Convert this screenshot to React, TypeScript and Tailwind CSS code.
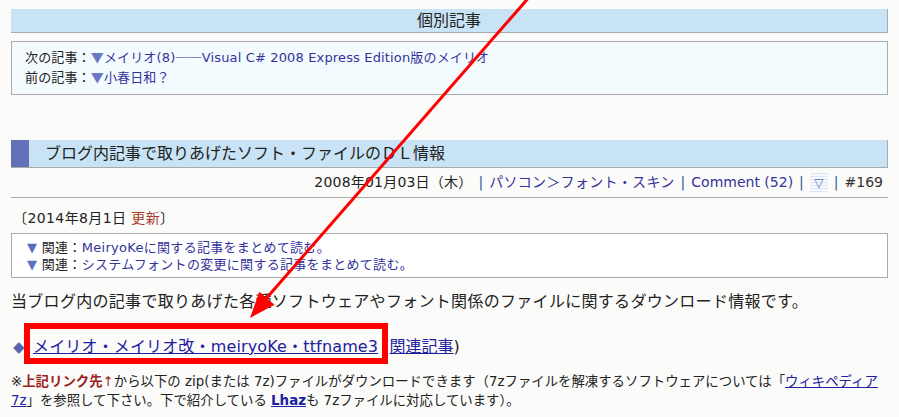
const FONT = { fontFamily: '"DejaVu Sans", "Noto Sans CJK JP", sans-serif' };
const CJK = { fontFamily: '"Noto Sans CJK JP", sans-serif' };

function Tri() {
  return <span className="text-[#5b6fc2]">▼</span>;
}

export default function App() {
  return (
    <div className="relative w-[899px] h-[417px] overflow-hidden bg-[#fbfbf9] text-[#222]" style={FONT}>
      <div className="px-[11px] pt-[9px]">
        {/* 個別記事 */}
        <div className="h-[24px] border-b border-r border-[#aaa] bg-[#c8e3f5] text-center text-[16px] leading-[23px]">
          個別記事
        </div>
        <div className="mt-[8px] border border-[#aaa] bg-[#f3fbff] pl-[13px] pt-[5px] pb-[7px] text-[13px] leading-[19px] tracking-[0.15px]">
          <div>
            次の記事：<span className="text-[#6a78c4]" style={CJK}>▼</span>
            <span className="text-[#33339a]">
              メイリオ(8)<span style={CJK}>──</span>Visual C# 2008 Express Edition版のメイリオ
            </span>
          </div>
          <div>
            前の記事：<span className="text-[#6a78c4]" style={CJK}>▼</span>
            <span className="text-[#33339a]">小春日和？</span>
          </div>
        </div>

        {/* Article header */}
        <div className="mt-[45px] flex h-[28px] items-stretch border-b border-r border-[#aaa] bg-[#c8e3f5]">
          <div className="w-[18px] bg-[#6470b9]" />
          <div className="pl-[16px] text-[16px] leading-[27px] text-[#222]">
            ブログ内記事で取りあげたソフト・ファイルのＤＬ情報
          </div>
        </div>
        <div className="flex h-[30px] items-center justify-end gap-[6px] border-b border-[#aaa] pr-[5px] text-[14px]">
          <span className="tracking-[0.2px]">2008年01月03日（木）</span>
          <span className="text-[#2a5aa0]">|</span>
          <span className="text-[#33339a] tracking-[0.3px]">パソコン＞フォント・スキン</span>
          <span className="text-[#2a5aa0]">|</span>
          <span className="text-[#33339a]">Comment (52)</span>
          <span className="text-[#2a5aa0]">|</span>
          <span className="flex h-[20px] w-[18px] items-center justify-center bg-[repeating-linear-gradient(180deg,#d9e7f7_0px,#d9e7f7_1px,#f6f9fd_1px,#f6f9fd_3px)] text-[12px] text-[#6a6ac0]">
            ▽
          </span>
          <span className="text-[#2a5aa0]">|</span>
          <span className="text-[#333]">#169</span>
        </div>

        <div className="mt-[10px] pl-[2px] text-[14px] leading-[20px] tracking-[0.4px]">
          〔2014年8月1日 <span className="text-[#a83a2e]">更新</span>〕
        </div>
        <div className="mt-[5px] border border-[#aaa] bg-white pl-[15px] pt-[5px] pb-[4px] text-[13px] leading-[17px] tracking-[0.3px]">
          <div>
            <Tri /> 関連：<span className="text-[#33339a]">MeiryoKeに関する記事をまとめて読む。</span>
          </div>
          <div>
            <Tri /> 関連：<span className="text-[#33339a]">システムフォントの変更に関する記事をまとめて読む。</span>
          </div>
        </div>

        <p className="mt-[12px] text-[16px] leading-[24px] tracking-[0.3px]">
          当ブログ内の記事で取りあげた各種ソフトウェアやフォント関係のファイルに関するダウンロード情報です。
        </p>

        <div className="mt-[21px] pl-[2px] text-[16px] leading-[24px]">
          <span className="inline-block w-[20px] text-[15px] text-[#5566aa]">◆</span>
          <span className="text-[#2020a0] underline tracking-[0.15px]">メイリオ・メイリオ改・meiryoKe・ttfname3</span>{" "}
          (<span className="text-[#2020a0] underline">関連記事</span>)
        </div>

        <div className="mt-[13px] whitespace-nowrap text-[13.4px] leading-[19px]">
          ※<b className="text-[#9a2222]">上記リンク先</b>
          <span className="text-[#9a2222]">↑</span>から以下の zip(または 7z)ファイルがダウンロードできます（7zファイルを解凍するソフトウェアについては「
          <span className="text-[#2020a0] underline">ウィキペディア</span>
          <br />
          <span className="text-[#2020a0] underline">7z</span>」を参照して下さい。下で紹介している{" "}
          <b className="text-[#2020a0] underline">Lhaz</b>も 7zファイルに対応しています）。
        </div>
      </div>

      {/* annotation overlay */}
      <div className="absolute left-[24px] top-[323px] h-[41px] w-[364px] border-[6px] border-[#ff0000]" />
      <svg className="absolute left-0 top-0" width="899" height="417">
        <line x1="531" y1="-5" x2="264" y2="301" stroke="#ff0000" strokeWidth="3" />
        <polygon points="250,318 274.5,304.8 259.3,291.8" fill="#ff0000" />
      </svg>
    </div>
  );
}
